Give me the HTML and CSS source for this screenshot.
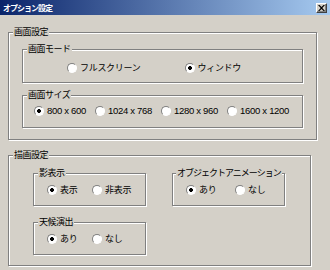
FILE: index.html
```html
<!DOCTYPE html>
<html lang="ja">
<head>
  <meta charset="UTF-8" />
  <title>オプション設定</title>
  <link rel="stylesheet" href="styles.css">
</head>
<body>
  <div class="window">
    <div class="titlebar">
      <span class="title">オプション設定</span>
      <button class="close" aria-label="閉じる">
        <svg width="7" height="6" viewBox="0 0 7 6"><path d="M0 0h1.5l2 2 2-2H7L4.3 3 7 6H5.5l-2-2-2 2H0l2.7-3z" fill="#000"/></svg>
      </button>
    </div>

    <div class="client">
      <fieldset class="group screen">
        <legend>画面設定</legend>
        <div class="group-body">
          <fieldset class="group sub">
            <legend>画面モード</legend>
            <div class="options mode">
              <label class="radio"><input type="radio" name="mode">フルスクリーン</label>
              <label class="radio"><input type="radio" name="mode" checked>ウィンドウ</label>
            </div>
          </fieldset>

          <fieldset class="group sub">
            <legend>画面サイズ</legend>
            <div class="options size">
              <label class="radio"><input type="radio" name="size" checked>800 x 600</label>
              <label class="radio"><input type="radio" name="size">1024 x 768</label>
              <label class="radio"><input type="radio" name="size">1280 x 960</label>
              <label class="radio"><input type="radio" name="size">1600 x 1200</label>
            </div>
          </fieldset>
        </div>
      </fieldset>

      <fieldset class="group render">
        <legend>描画設定</legend>
        <div class="group-body">
          <fieldset class="group small">
            <legend>影表示</legend>
            <div class="options">
              <label class="radio"><input type="radio" name="shadow" checked>表示</label>
              <label class="radio"><input type="radio" name="shadow">非表示</label>
            </div>
          </fieldset>

          <fieldset class="group small">
            <legend class="long">オブジェクトアニメーション</legend>
            <div class="options wide">
              <label class="radio"><input type="radio" name="anim" checked>あり</label>
              <label class="radio"><input type="radio" name="anim">なし</label>
            </div>
          </fieldset>

          <fieldset class="group small">
            <legend>天候演出</legend>
            <div class="options">
              <label class="radio"><input type="radio" name="weather" checked>あり</label>
              <label class="radio"><input type="radio" name="weather">なし</label>
            </div>
          </fieldset>
        </div>
      </fieldset>
    </div>
  </div>
</body>
</html>
```

FILE: styles.css
```css
:root {
  --face: #d4d0c8;
  --shadow: #808080;
  --light: #ffffff;
}

* {
  box-sizing: border-box;
}

body {
  margin: 0;
  background: var(--face);
  font-family: "Liberation Sans", "Noto Sans CJK JP", sans-serif;
  font-size: 9px;
  color: #000;
}

.window {
  width: 330px;
  height: 270px;
  overflow: hidden;
}

/* title bar */
.titlebar {
  height: 15px;
  display: flex;
  align-items: center;
  justify-content: space-between;
  padding: 0 3px;
  background: linear-gradient(to right, #0a246a, #a6caf0);
}

.title {
  color: #fff;
  font-family: "Noto Sans CJK JP", sans-serif;
  font-weight: bold;
  font-size: 8px;
  letter-spacing: -1px;
  line-height: 15px;
}

.close {
  width: 11px;
  height: 10px;
  padding: 0;
  display: flex;
  align-items: center;
  justify-content: center;
  background: var(--face);
  border: 1px solid;
  border-color: var(--light) #404040 #404040 var(--light);
  box-shadow: inset -1px -1px var(--shadow);
}

/* group boxes */
.client {
  padding: 11px 0 0 8px;
}

.group {
  margin: 0;
  padding: 0;
  min-inline-size: 0;
  border: 1px solid var(--shadow);
  box-shadow: inset 1px 1px var(--light), 1px 1px var(--light);
}

.group legend {
  margin-left: 4px;
  padding: 0 1px;
  line-height: 12px;
  white-space: nowrap;
  background: var(--face);
  font-family: "Noto Sans CJK JP", sans-serif;
  letter-spacing: -0.5px;
}

.group legend.long {
  margin-left: 3px;
  letter-spacing: -1px;
}

.screen {
  width: 309px;
}

.screen > .group-body {
  display: flex;
  flex-direction: column;
  gap: 6px;
  padding: 5px 13px 11px;
}

.render {
  width: 303px;
  margin-top: 9px;
}

.render > .group-body {
  display: grid;
  grid-template-columns: 113px 113px;
  column-gap: 26px;
  row-gap: 10px;
  padding: 6px 0 10px 24px;
}

/* radio rows */
.options {
  display: flex;
  align-items: center;
  line-height: 12px;
  padding: 5px 0 9px 13px;
}

.options .radio {
  width: 45px;
}

.options.wide .radio {
  width: 53px;
}

.options.mode {
  padding: 7px 0 8px 44px;
}

.options.mode .radio {
  width: 132px;
}

.options.size {
  gap: 9px;
  padding: 4px 0 10px 11px;
  font-size: 9.5px;
}

.options.size .radio {
  width: auto;
}

.radio {
  display: flex;
  align-items: center;
  white-space: nowrap;
  font-family: "Liberation Sans", "Noto Sans CJK JP", sans-serif;
  letter-spacing: -0.3px;
}

.radio input {
  appearance: none;
  width: 10px;
  height: 10px;
  margin: 0 3px 0 0;
  border-radius: 50%;
  border: 1px solid;
  border-color: var(--shadow) var(--light) var(--light) var(--shadow);
  background: #fff;
}

.radio input:checked {
  background: radial-gradient(circle, #000 0 1.6px, #fff 2.2px);
}
```
